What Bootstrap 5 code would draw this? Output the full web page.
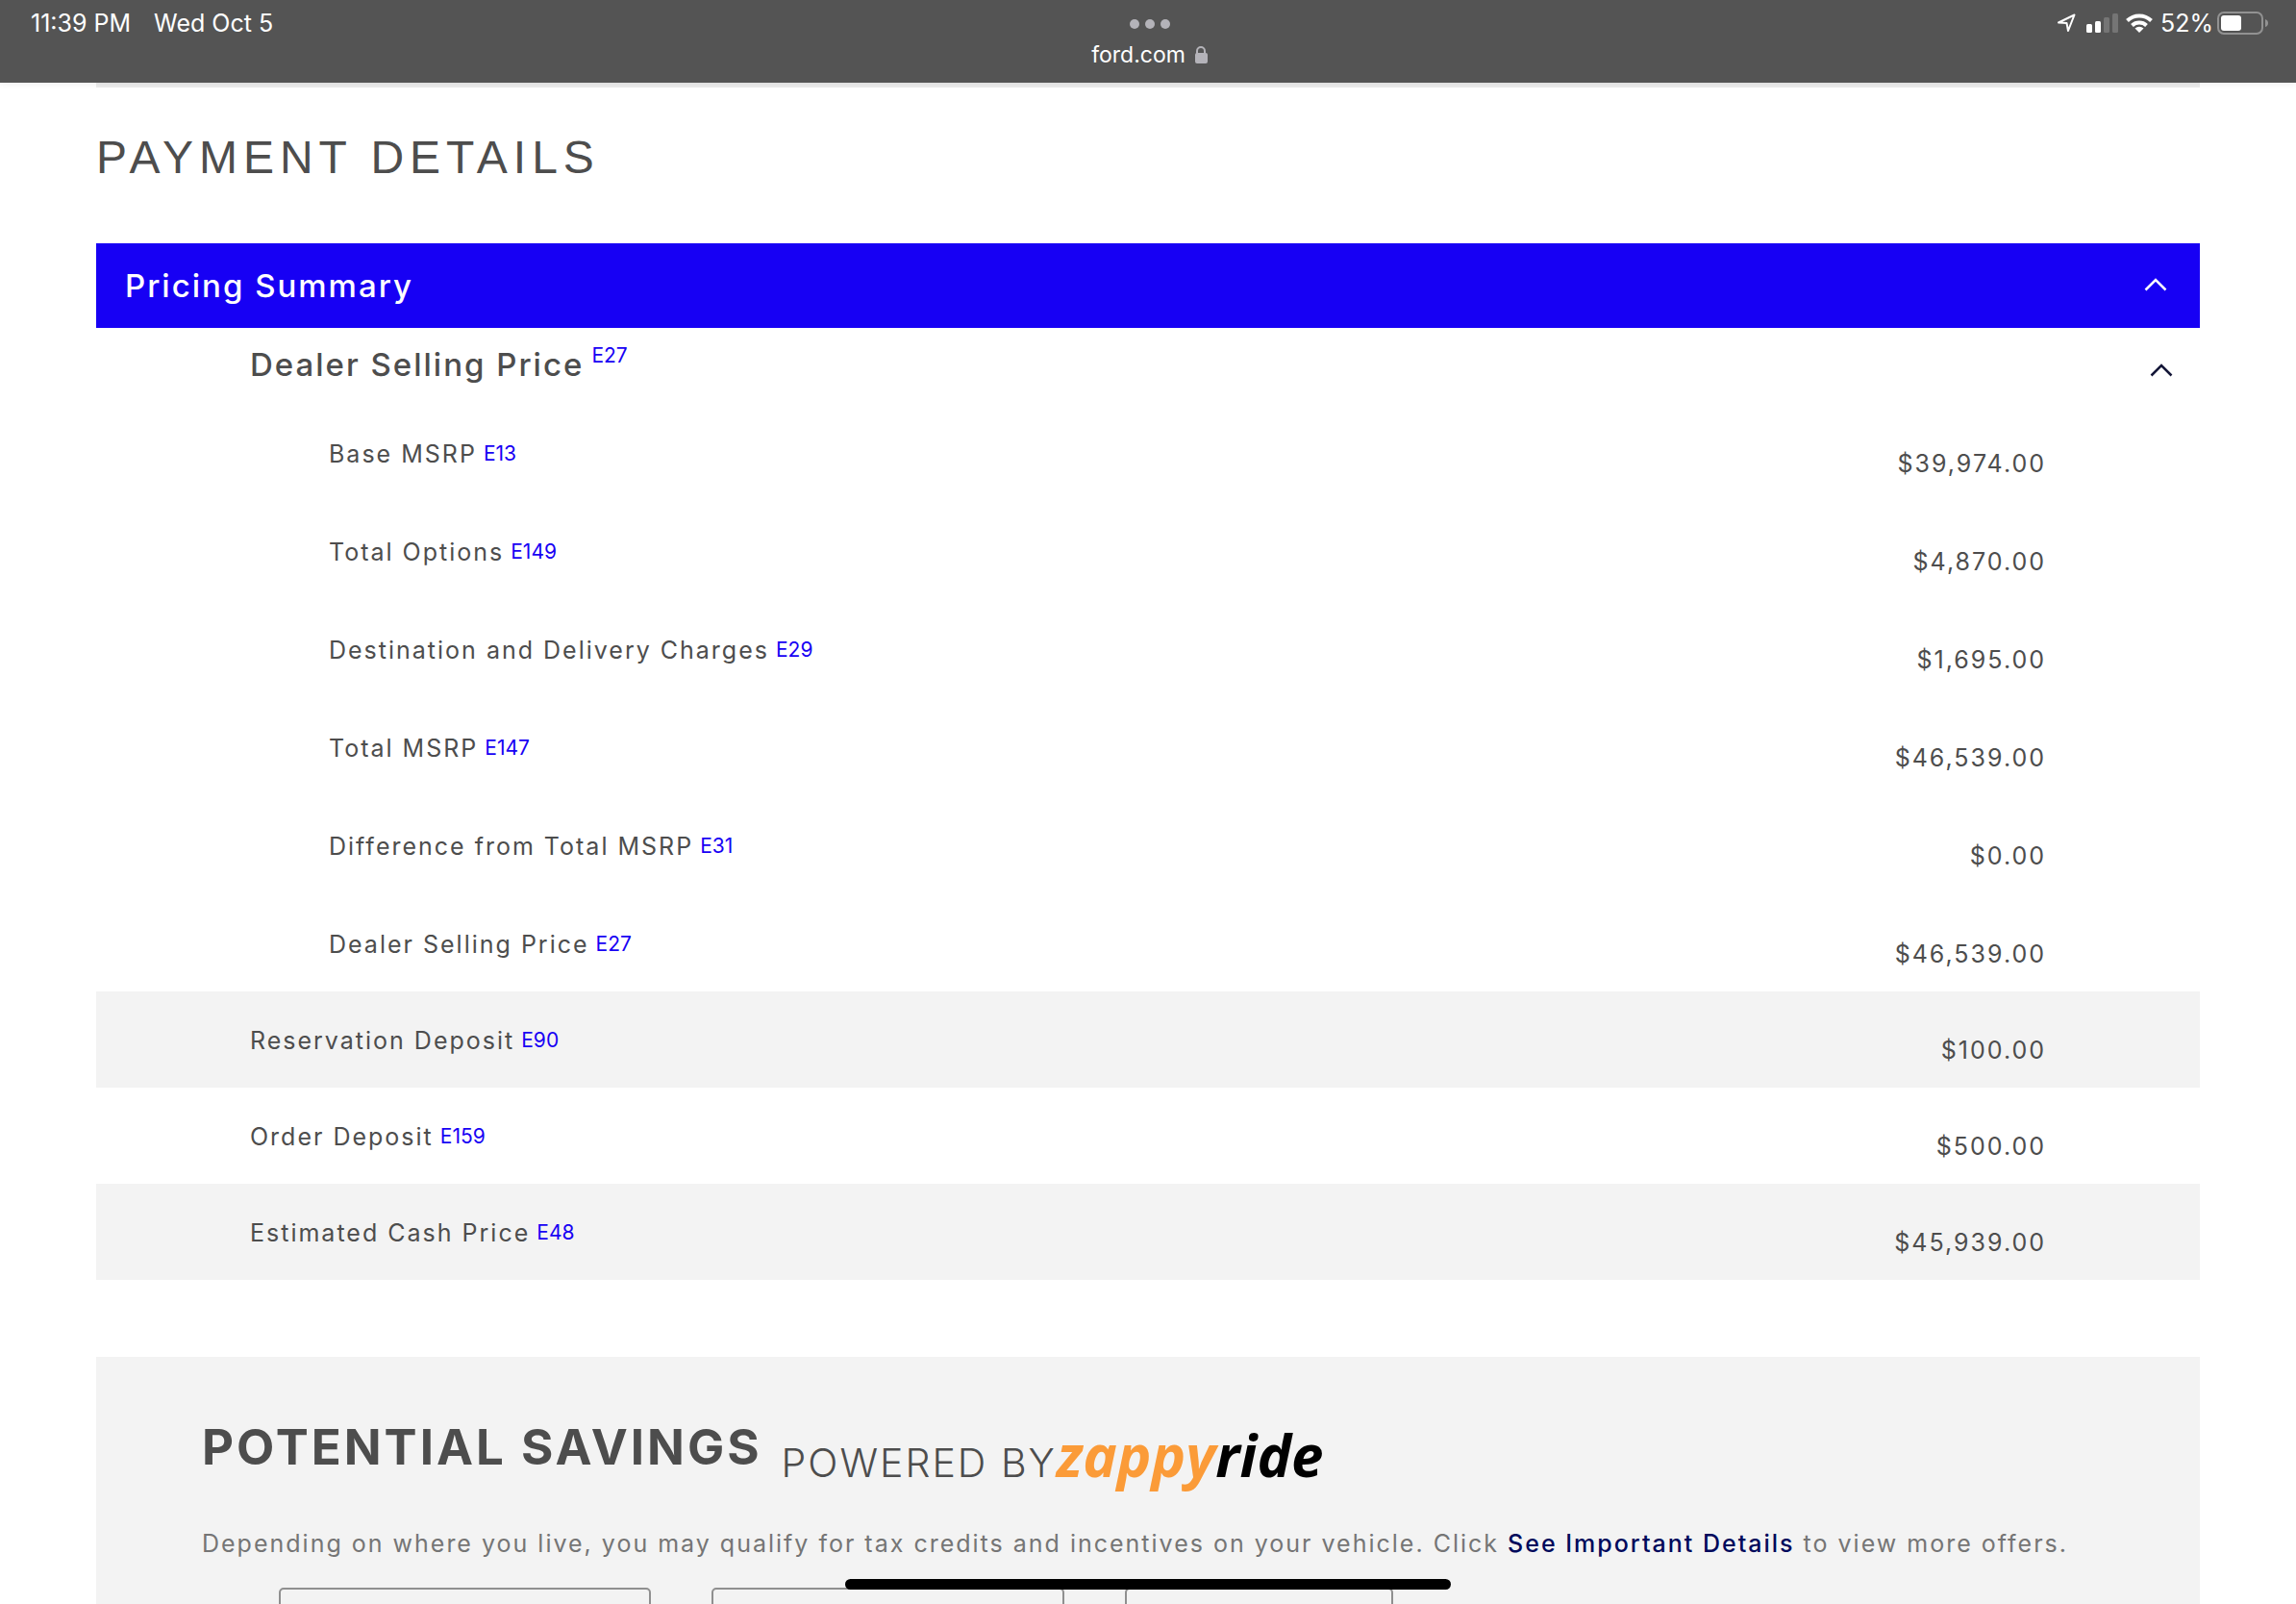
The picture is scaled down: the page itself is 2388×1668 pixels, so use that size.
<!DOCTYPE html>
<html lang="en">
<head>
<meta charset="utf-8">
<meta name="viewport" content="width=device-width, initial-scale=1">
<title>Payment Details</title>
<link href="https://cdn.jsdelivr.net/npm/bootstrap@5.3.0/dist/css/bootstrap.min.css" rel="stylesheet">
<style>
  body { font-family: Inter, "Liberation Sans", sans-serif; font-size: 25px; line-height: 36px; color: #4d4d4d; background: #fff; height: 100vh; }
  a { text-decoration: none; }
  .status-bar { height: 86px; padding: 0 28px 0 32px; background: #545454; color: #fff; box-shadow: 0 0 8px rgba(0,0,0,.1); position: relative; z-index: 2; line-height: 48px; flex: none; }
  .status-side { flex: 1 1 0; }
  .status-bar svg, .chev { display: block; flex: none; }
  .address { font-size: 23px; line-height: 36px; }
  .dots { padding: 20px 0 9px; }
  .page-wrap { padding: 0 100px; flex: 1 1 0; min-height: 0; overflow: hidden; }
  .top-rule { height: 5px; background: #ececec; }
  .page-title { font: 48px/56px "Liberation Sans", Arial, sans-serif; letter-spacing: 6px; margin: 45px 0 61px; }
  .summary-head { height: 88px; padding: 0 34px 0 30px; background: #1700f4; color: #fff; border: 0; font-size: 33px; font-weight: 500; letter-spacing: 2px; }
  .group-head { height: 78px; padding: 15px 28px 0 160px; }
  .group-name { font-size: 33px; line-height: 46px; font-weight: 500; letter-spacing: 2px; }
  .note-link { font-size: 21px; line-height: 20px; color: #1700f4; letter-spacing: 0; font-weight: 400; vertical-align: 2px; margin-left: -2px; }
  .raised { align-self: flex-start; padding-top: 4px; margin-left: 8px; }
  .price-table td, .price-table th { font-weight: 400; vertical-align: top; padding: 33px 0 0 160px; height: 100px; letter-spacing: 2px; }
  .price-table td { text-align: right; padding: 43px 160px 0 0; }
  .price-table .line-item th { padding: 35px 0 0 242px; height: 102px; }
  .price-table .line-item td { padding-top: 45px; height: 102px; }
  .shaded { background: #f3f3f3; }
  .savings { margin-top: 80px; padding: 66px 0 0 110px; }
  .savings-title { font-size: 51px; line-height: 56px; font-weight: 700; letter-spacing: 3px; margin: 0; }
  .powered { font-size: 41px; line-height: 88px; font-weight: 300; letter-spacing: 2px; margin-left: 20px; }
  .zappy { font: italic 700 60px/72px "Open Sans", "Noto Sans", sans-serif; color: #000; }
  .zappy span { color: #fb9b38; }
  .savings-text { color: #757575; letter-spacing: 2px; margin: 22px 0 28px; }
  .savings-text a { color: #00095b; font-weight: 500; }
  .tiles { gap: 63px; padding-left: 80px; }
  .tile { height: 200px; border: 2px solid #8f8f8f; border-radius: 5px; }
  .tile-a { flex: 0 0 387px; } .tile-b { flex: 0 0 367px; } .tile-c { flex: 0 0 279px; }
  .home-bar { position: fixed; left: 50%; bottom: 15px; width: 630px; height: 11px; margin-left: -315px; border-radius: 6px; background: #000; z-index: 5; }
</style>
<script src="https://cdn.jsdelivr.net/npm/bootstrap@5.3.0/dist/js/bootstrap.bundle.min.js"></script>
</head>
<body class="d-flex flex-column">
<header class="status-bar d-flex align-items-start">
  <div class="status-side d-flex gap-4"><span>11:39 PM</span><span>Wed Oct 5</span></div>
  <div>
    <div class="dots d-flex justify-content-center"><svg width="42" height="10" fill="#b4b3b9"><circle cx="5" cy="5" r="5"/><circle cx="21" cy="5" r="5"/><circle cx="37" cy="5" r="5"/></svg></div>
    <div class="address d-flex align-items-center justify-content-center"><span>ford.com</span>
      <svg class="ms-2" width="16" height="20" viewBox="0 0 16 20"><path d="M4 10V6a4 4 0 0 1 8 0v4" fill="none" stroke="#b4b3b9" stroke-width="2"/><rect x="2" y="8" width="13" height="11" rx="2" fill="#b4b3b9"/></svg></div>
  </div>
  <div class="status-side d-flex justify-content-end">
    <svg width="100" height="46" viewBox="0 0 100 46">
      <path d="M2 23.500 18.500 15.500 12 32l-1.500-8z" fill="none" stroke="#fff" stroke-width="2" stroke-linejoin="round"/>
      <g fill="#fff"><rect x="31" y="25" width="6" height="9" rx="1.500"/><rect x="40" y="22" width="6" height="12" rx="1.500"/></g>
      <g fill="#757575"><rect x="49" y="18" width="6" height="16" rx="1.500"/><rect x="58" y="14" width="6" height="20" rx="1.500"/></g>
      <g transform="translate(72 0)"><path d="M1.500 21.500a18 18 0 0 1 25 0M6.500 26.500a11 11 0 0 1 15 0" fill="none" stroke="#fff" stroke-width="4"/><path d="M9.500 29.500a6.500 6.500 0 0 1 9 0L14 34z" fill="#fff"/></g>
    </svg>
    <span class="ms-2 me-1">52%</span>
    <svg width="54" height="46" viewBox="0 0 54 46"><rect x="1" y="13" width="46" height="22" rx="6" fill="none" stroke="#929292" stroke-width="2"/><rect x="4" y="16" width="21" height="16" rx="3" fill="#fff"/><path d="M50 20q3 1 3 4t-3 4z" fill="#929292"/></svg>
  </div>
</header>
<main class="page-wrap">
  <div class="top-rule"></div>
  <h1 class="page-title">PAYMENT DETAILS</h1>
  <section>
    <button type="button" class="summary-head w-100 d-flex align-items-center justify-content-between" data-bs-toggle="collapse" data-bs-target="#summary" aria-expanded="true">Pricing Summary
      <svg class="chev" width="24" height="16" viewBox="0 0 24 16" fill="none" stroke="#fff" stroke-width="2.500"><path d="M1.500 12.500 12 2l10.500 10.500"/></svg>
    </button>
    <div id="summary" class="collapse show">
      <div class="group-head d-flex align-items-start">
        <span class="group-name">Dealer Selling Price</span>
        <a href="#e27" class="note-link raised">E27</a>
        <button type="button" class="btn p-0 border-0 ms-auto mt-3" aria-label="Toggle dealer selling price" data-bs-toggle="collapse" data-bs-target="#dealer" aria-expanded="true"><svg class="chev mt-1" width="24" height="16" viewBox="0 0 24 16" fill="none" stroke="#141638" stroke-width="2.500"><path d="M1.500 14.500 12 4l10.500 10.500"/></svg></button>
      </div>
      <table class="price-table w-100">
        <tbody id="dealer" class="collapse show">
          <tr class="line-item"><th scope="row">Base MSRP <a class="note-link" href="#e13">E13</a></th><td>$39,974.00</td></tr>
          <tr class="line-item"><th scope="row">Total Options <a class="note-link" href="#e149">E149</a></th><td>$4,870.00</td></tr>
          <tr class="line-item"><th scope="row">Destination and Delivery Charges <a class="note-link" href="#e29">E29</a></th><td>$1,695.00</td></tr>
          <tr class="line-item"><th scope="row">Total MSRP <a class="note-link" href="#e147">E147</a></th><td>$46,539.00</td></tr>
          <tr class="line-item"><th scope="row">Difference from Total MSRP <a class="note-link" href="#e31">E31</a></th><td>$0.00</td></tr>
          <tr class="line-item"><th scope="row">Dealer Selling Price <a class="note-link" href="#e27">E27</a></th><td>$46,539.00</td></tr>
        </tbody>
        <tbody>
          <tr class="shaded"><th scope="row">Reservation Deposit <a class="note-link" href="#e90">E90</a></th><td>$100.00</td></tr>
          <tr><th scope="row">Order Deposit <a class="note-link" href="#e159">E159</a></th><td>$500.00</td></tr>
          <tr class="shaded"><th scope="row">Estimated Cash Price <a class="note-link" href="#e48">E48</a></th><td>$45,939.00</td></tr>
        </tbody>
      </table>
    </div>
  </section>
  <section class="savings shaded">
    <div class="d-flex align-items-start">
      <h2 class="savings-title">POTENTIAL SAVINGS</h2>
      <span class="powered">POWERED BY</span>
      <span class="zappy"><span>zappy</span>ride</span>
    </div>
    <p class="savings-text">Depending on where you live, you may qualify for tax credits and incentives on your vehicle. Click <a href="#details">See Important Details</a> to view more offers.</p>
    <div class="tiles d-flex"><div class="tile tile-a"></div><div class="tile tile-b"></div><div class="tile tile-c"></div></div>
  </section>
</main>
<div class="home-bar"></div>
</body>
</html>
